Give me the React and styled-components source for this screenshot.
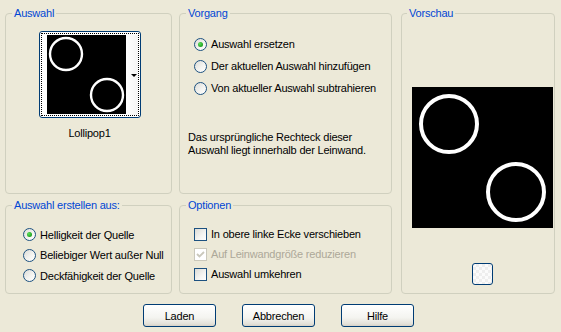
import React from "react";
import styled, { createGlobalStyle } from "styled-components";

const Global = createGlobalStyle`
  html, body { margin: 0; padding: 0; background: #ECE9D8; }
  body { font-family: "Liberation Sans", Arial, sans-serif; font-size: 11px; letter-spacing: -0.2px; color: #000; }
  * { box-sizing: border-box; }
`;

const Page = styled.div`
  width: 561px;
  height: 332px;
  padding: 13px 0 0 5px;
  display: flex;
  flex-direction: column;
`;

const Grid = styled.div`
  display: grid;
  grid-template-columns: 167px 213px 156px;
  grid-template-rows: 181px 89px;
  column-gap: 7px;
  row-gap: 11px;
`;

const Group = styled.div`
  position: relative;
  border: 1px solid #D0D0BF;
  border-radius: 4px;
  display: flex;
  flex-direction: column;
  align-items: ${p => p.$center ? "center" : "flex-start"};
  padding: ${p => p.$pad || "0"};
  grid-column: ${p => p.$col};
  grid-row: ${p => p.$row};
  margin-left: ${p => p.$ml || 0}px;
`;

const Legend = styled.span`
  position: absolute;
  top: -7px;
  left: ${p => p.$left || 6}px;
  padding: 0 2px;
  background: #ECE9D8;
  color: #0046D5;
  line-height: 13px;
  white-space: nowrap;
`;

const Thumb = styled.div`
  width: 102px;
  height: 87px;
  border: 1px solid #003C74;
  border-radius: 3px;
  padding: 1px;
  background: #fff;
`;

const Focus = styled.div`
  width: 100%;
  height: 100%;
  border: 1px dotted #000;
  display: flex;
  padding: 1px 0 0 5px;
`;

const Strip = styled.div`
  flex: 1;
  background: linear-gradient(90deg, #fff, #f4f4f4);
  display: flex;
  align-items: center;
  justify-content: flex-end;
  padding-right: 1px;
`;

const Arrow = styled.span`
  width: 0;
  height: 0;
  border-left: 3px solid transparent;
  border-right: 3px solid transparent;
  border-top: 3px solid #000;
`;

const Caption = styled.div`
  margin-top: 9px;
  line-height: 13px;
`;

const List = styled.div`
  display: flex;
  flex-direction: column;
`;

const Row = styled.label`
  display: flex;
  align-items: center;
  height: ${p => p.$h}px;
  gap: 4px;
  color: ${p => p.$disabled ? "#ACA899" : "#000"};
  white-space: nowrap;
`;

const Radio = styled.span`
  width: 13px;
  height: 13px;
  border-radius: 50%;
  border: 1px solid #1C5180;
  background: linear-gradient(135deg, #DCDCD7 0%, #F5F5F2 60%, #FFFFFF 100%);
  display: flex;
  align-items: center;
  justify-content: center;
  flex-shrink: 0;
  &::after {
    content: "";
    width: 5px;
    height: 5px;
    border-radius: 50%;
    background: radial-gradient(circle at 35% 35%, #5BE05B, #21A121 70%);
    display: ${p => p.$checked ? "block" : "none"};
  }
`;

const Check = styled.span`
  width: 13px;
  height: 13px;
  border: 1px solid ${p => p.$disabled ? "#CAC8BB" : "#1C5180"};
  background: ${p => p.$disabled ? "#fff" : "linear-gradient(135deg, #DCDCD7 0%, #F5F5F2 60%, #FFFFFF 100%)"};
  display: flex;
  align-items: center;
  justify-content: center;
  flex-shrink: 0;
`;

const Desc = styled.div`
  margin-top: 32px;
  margin-left: -6px;
  line-height: 13px;
  white-space: nowrap;
`;

const Preview = styled.div`
  margin-top: 73px;
  width: 141px;
  height: 141px;
  background: #000;
`;

const MiniButton = styled.div`
  margin-top: 35px;
  width: 21px;
  height: 22px;
  border: 1px solid #003C74;
  border-radius: 3px;
  background:
    linear-gradient(45deg, #eee 25%, transparent 25%, transparent 75%, #eee 75%),
    linear-gradient(45deg, #eee 25%, #fbfbfb 25%, #fbfbfb 75%, #eee 75%);
  background-size: 6px 6px;
  background-position: 0 0, 3px 3px;
`;

const Buttons = styled.div`
  display: flex;
  gap: 26px;
  margin-top: 10px;
  padding-left: 138px;
`;

const Button = styled.button`
  width: 73px;
  height: 23px;
  border: 1px solid #003C74;
  border-radius: 3px;
  background: linear-gradient(180deg, #FFFFFF 0%, #F4F4F0 60%, #E3E1D9 90%, #D6D0C5 100%);
  font-family: "Liberation Sans", Arial, sans-serif;
  font-size: 11px;
  letter-spacing: -0.2px;
  color: #000;
  padding: 0;
`;

const Circles = ({ size, items, sw }) => (
  <svg width={size} height={size} viewBox={`0 0 ${size} ${size}`} style={{ display: "block" }}>
    <rect width={size} height={size} fill="#000" />
    {items.map(([cx, cy, r], i) => (
      <circle key={i} cx={cx} cy={cy} r={r} fill="none" stroke="#fff" strokeWidth={sw} />
    ))}
  </svg>
);

const CheckMark = () => (
  <svg width="9" height="9" viewBox="0 0 9 9">
    <path d="M1 4 L3.5 6.5 L8 2" fill="none" stroke="#CAC8BB" strokeWidth="1.8" />
  </svg>
);

export default function App() {
  return (
    <Page>
      <Global />
      <Grid>
        <Group $col="1" $row="1" $center $pad="17px 0 0 2px">
          <Legend $left={6}>Auswahl</Legend>
          <Thumb>
            <Focus>
              <Circles size={79} sw={2.4} items={[[19, 19, 16], [60, 60, 16]]} />
              <Strip><Arrow /></Strip>
            </Focus>
          </Thumb>
          <Caption>Lollipop1</Caption>
        </Group>

        <Group $col="2" $row="1" $pad="19px 0 0 14px">
          <Legend $left={6}>Vorgang</Legend>
          <List>
            <Row $h={22}><Radio $checked />Auswahl ersetzen</Row>
            <Row $h={22}><Radio />Der aktuellen Auswahl hinzufügen</Row>
            <Row $h={22}><Radio />Von aktueller Auswahl subtrahieren</Row>
          </List>
          <Desc>
            Das ursprüngliche Rechteck dieser<br />
            Auswahl liegt innerhalb der Leinwand.
          </Desc>
        </Group>

        <Group $col="3" $row="1 / span 2" $center $ml={2} $pad="0 0 0 9px">
          <Legend $left={5}>Vorschau</Legend>
          <Preview>
            <Circles size={141} sw={4} items={[[37, 37, 28], [104, 105, 28]]} />
          </Preview>
          <MiniButton />
        </Group>

        <Group $col="1" $row="2" $pad="18px 0 0 17px">
          <Legend $left={6}>Auswahl erstellen aus:</Legend>
          <List>
            <Row $h={21}><Radio $checked />Helligkeit der Quelle</Row>
            <Row $h={20}><Radio />Beliebiger Wert außer Null</Row>
            <Row $h={21}><Radio />Deckfähigkeit der Quelle</Row>
          </List>
        </Group>

        <Group $col="2" $row="2" $pad="18px 0 0 14px">
          <Legend $left={6}>Optionen</Legend>
          <List>
            <Row $h={20}><Check />In obere linke Ecke verschieben</Row>
            <Row $h={20} $disabled><Check $disabled><CheckMark /></Check>Auf Leinwandgröße reduzieren</Row>
            <Row $h={20}><Check />Auswahl umkehren</Row>
          </List>
        </Group>
      </Grid>
      <Buttons>
        <Button>Laden</Button>
        <Button>Abbrechen</Button>
        <Button>Hilfe</Button>
      </Buttons>
    </Page>
  );
}
